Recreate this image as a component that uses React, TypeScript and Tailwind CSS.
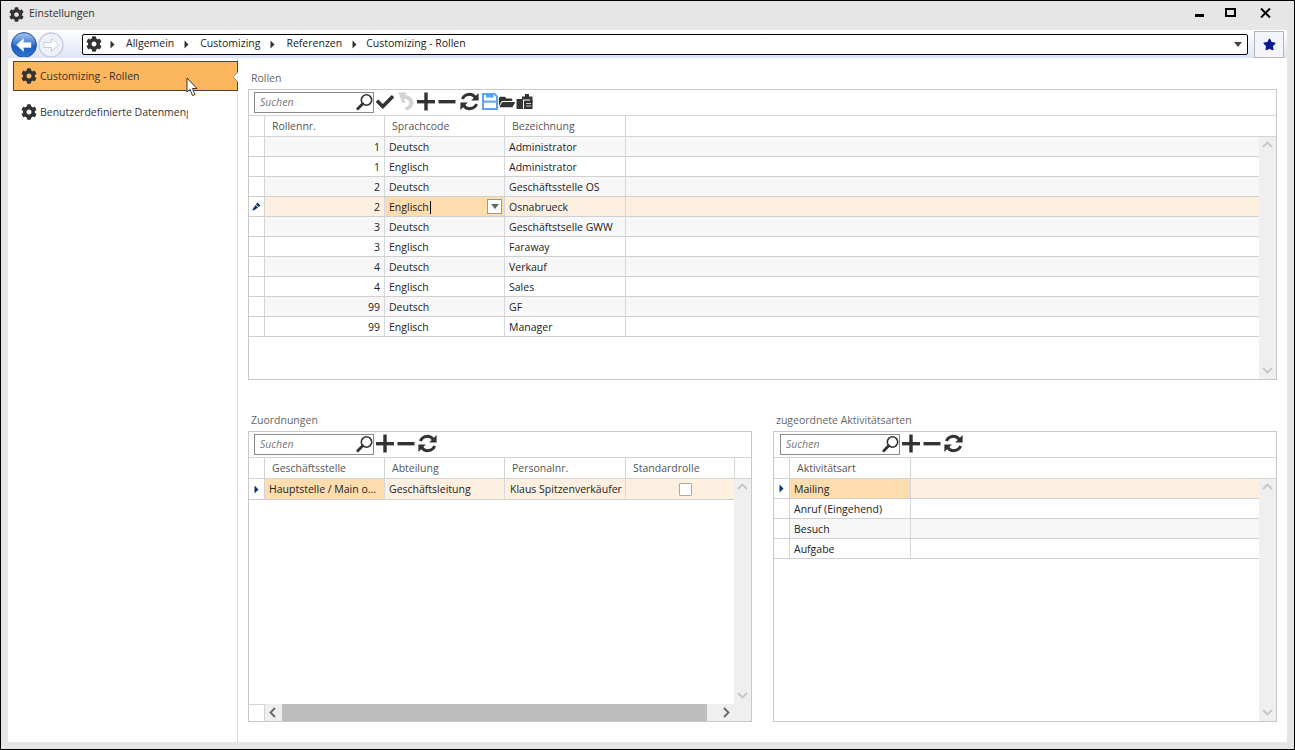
import React from "react";
import { FaCog, FaCheck, FaFolderOpen, FaStar } from "react-icons/fa";

const Gear = ({ s = 16 }: { s?: number }) => <FaCog size={s} color="#333" />;

const SearchIcon = () => (
  <svg width="18" height="18" viewBox="0 0 18 18" fill="none" stroke="#333">
    <circle cx="10.5" cy="7" r="5.2" strokeWidth="1.6" />
    <path d="M6.7 10.8 L1.8 15.8" strokeWidth="2.8" strokeLinecap="round" />
  </svg>
);
const Plus = () => (
  <svg width="20" height="20" viewBox="0 0 20 20" fill="#333">
    <rect x="1" y="8" width="18" height="3.4" />
    <rect x="8.3" y="0.5" width="3.4" height="18" />
  </svg>
);
const Minus = () => (
  <svg width="18" height="20" viewBox="0 0 18 20" fill="#333">
    <rect x="0.5" y="8" width="17" height="3.4" />
  </svg>
);
const Refresh = () => (
  <svg width="19" height="19" viewBox="0 0 19 19" fill="none">
    <path d="M15.4 5.6 A7.4 7.4 0 0 0 2.4 7" stroke="#333" strokeWidth="3" />
    <path d="M3.6 13.4 A7.4 7.4 0 0 0 16.6 12" stroke="#333" strokeWidth="3" />
    <path d="M18.6 1 L18.6 8.6 L11.2 8.6 Z" fill="#333" />
    <path d="M0.4 18 L0.4 10.4 L7.8 10.4 Z" fill="#333" />
  </svg>
);
const Undo = () => (
  <svg width="16" height="19" viewBox="0 0 16 19" fill="none">
    <path d="M0.5 0.5 L9 0.5 L6.6 3 C11.6 3.4 15.5 6.5 15.5 10.5 C15.5 13.8 12.5 16.8 8.8 18.8 L6.6 16 C9.8 14.4 11.4 12.8 11.4 10.7 C11.4 8.6 9.2 7 5.8 6.8 L8 10.4 L4 10.4 Z" fill="#d3d3d3" />
  </svg>
);
const Save = () => (
  <svg width="16" height="17" viewBox="0 0 16 17" fill="none">
    <path d="M1 1 H12.5 L15 3.5 V16 H1 Z" stroke="#5aa2ee" strokeWidth="2" fill="#fff" />
    <rect x="4" y="1" width="7.5" height="3.6" fill="#5aa2ee" />
    <rect x="1" y="7.6" width="14" height="2" fill="#5aa2ee" />
  </svg>
);
const Paste = () => (
  <svg width="17" height="17" viewBox="0 0 17 17" fill="#333">
    <path d="M0.5 6 H7 V16 H0.5 Z" />
    <path d="M6 3.5 H9 V1 H13 V3.5 H16.5 V10 H14 V6.5 H6 Z" />
    <path d="M8 7.5 H16.5 V16 H8 Z" />
    <path d="M10 10 H15 V11 H10 Z M10 12.5 H15 V13.5 H10 Z" fill="#ccc" />
  </svg>
);
const Chevron = ({ d, c = "#c6c6c6" }: { d: "up" | "down" | "left" | "right"; c?: string }) => {
  const p = { up: "M1 7 L5.5 2.5 L10 7", down: "M1 3 L5.5 7.5 L10 3", left: "M7 1 L2.5 5.5 L7 10", right: "M3 1 L7.5 5.5 L3 10" }[d];
  return (
    <svg width="11" height="11" viewBox="0 0 11 11" fill="none" stroke={c} strokeWidth="1.8">
      <path d={p} />
    </svg>
  );
};
const Tri = ({ c = "#333" }: { c?: string }) => (
  <svg width="5" height="9" viewBox="0 0 5 9" fill={c}>
    <path d="M0.5 0.5 L4.5 4.5 L0.5 8.5 Z" />
  </svg>
);

const Search = () => (
  <div className="flex h-[21px] w-[120px] flex-none items-center justify-between border border-[#8a8a8a] bg-white pl-[5px]">
    <span className="text-[10.5px] italic text-[#777]">Suchen</span>
    <span className="flex-none -mr-px -mt-px"><SearchIcon /></span>
  </div>
);

const Label = ({ children }: { children: React.ReactNode }) => (
  <div className="flex h-[22px] items-center pl-[3px] pt-[2px] text-[#666]">{children}</div>
);

type Col = { w: string; title: string };

const Head = ({ cols }: { cols: Col[] }) => (
  <div className="flex h-[22px] flex-none border-b border-t border-[#d4d4d4] text-[#555]">
    <div className="w-[16px] flex-none border-r border-[#d4d4d4]" />
    {cols.map((c) => (
      <div key={c.title} className={`${c.w} flex flex-none items-center border-r border-[#d4d4d4] pl-[7px] pt-[2px]`}>{c.title}</div>
    ))}
  </div>
);

const Cell = ({ w, children, right, bg, tp = "pt-[2px]" }: { w: string; children?: React.ReactNode; right?: boolean; bg?: string; tp?: string }) => (
  <div className={`${w} ${bg ?? ""} ${tp} relative flex flex-none items-center overflow-hidden whitespace-nowrap border-r border-[#d3d8e0] px-[4px] ${right ? "justify-end" : ""}`}>{children}</div>
);

const VScroll = () => (
  <div className="flex w-[17px] flex-none flex-col items-center justify-between bg-[#efefef] py-[3px]">
    <Chevron d="up" />
    <Chevron d="down" />
  </div>
);

const rollen: [string, string, string][] = [
  ["1", "Deutsch", "Administrator"],
  ["1", "Englisch", "Administrator"],
  ["2", "Deutsch", "Geschäftsstelle OS"],
  ["2", "Englisch", "Osnabrueck"],
  ["3", "Deutsch", "Geschäftstselle GWW"],
  ["3", "Englisch", "Faraway"],
  ["4", "Deutsch", "Verkauf"],
  ["4", "Englisch", "Sales"],
  ["99", "Deutsch", "GF"],
  ["99", "Englisch", "Manager"],
];

const Indicator = ({ children }: { children?: React.ReactNode }) => (
  <div className="flex w-[16px] flex-none items-center justify-center border-r border-[#d4d4d4] bg-white">{children}</div>
);

const Pencil = () => (
  <svg width="9" height="9" viewBox="0 0 9 9" fill="#12346e">
    <path d="M5.5 0.5 L8.5 3.5 L6.5 5 L4 2.5 Z" />
    <path d="M3.6 3 L6 5.4 L2.5 8 L0.5 8.5 L1 6.5 Z" />
  </svg>
);

export default function App() {
  return (
    <div className="relative flex h-[750px] w-[1295px] flex-col overflow-hidden border border-black bg-[#e6e6e6] text-[10.5px] text-[#222] [font-family:'Open_Sans','Noto_Sans',sans-serif]">
      {/* title bar */}
      <div className="flex h-[29px] flex-none items-center pb-[3px] pl-[8px]">
        <Gear s={15} />
        <span className="ml-[5px] text-[#333]">Einstellungen</span>
        <div className="ml-auto flex items-center pb-[3px] text-black">
          <div className="mr-[21px] mt-[6px] h-[3px] w-[9px] bg-black" />
          <div className="mr-[24px] h-[9px] w-[11px] border-2 border-black" />
          <svg className="mr-[23px]" width="11" height="10" viewBox="0 0 11 10" stroke="#000" strokeWidth="2"><path d="M1 0.5 L10 9.5 M10 0.5 L1 9.5" /></svg>
        </div>
      </div>
      {/* body */}
      <div className="mx-[7px] mb-[7px] flex min-h-0 flex-1 flex-col bg-white">
        {/* nav */}
        <div className="flex h-[28px] flex-none items-center bg-gradient-to-b from-white to-[#dde4f6]">
          <svg className="ml-[2px] flex-none" width="56" height="26" viewBox="0 0 56 26">
            <defs>
              <linearGradient id="b" x1="0" y1="0" x2="0" y2="1">
                <stop offset="0" stopColor="#a9c8ef" />
                <stop offset="0.45" stopColor="#3f7bd2" />
                <stop offset="0.55" stopColor="#1c5dbd" />
                <stop offset="1" stopColor="#2a78d8" />
              </linearGradient>
            </defs>
            <circle cx="14" cy="14" r="12.4" fill="url(#b)" stroke="#1c4f96" />
            <path d="M21 11.5 H13.5 V7.5 L6.5 14 L13.5 20.5 V16.5 H21 Z" fill="#fff" stroke="#dfe6f2" strokeWidth="0.5" />
            <circle cx="41" cy="14" r="12" fill="#eef1f8" stroke="#c6cde0" strokeWidth="1.4" />
            <path d="M34 11.5 H41.5 V7.5 L48.5 14 L41.5 20.5 V16.5 H34 Z" fill="#fff" stroke="#c6cde0" />
          </svg>
          <div className="ml-[16px] flex h-[21px] w-[1166px] flex-none items-center rounded-[2px] border border-black bg-white pl-[3px]">
            <Gear s={16} />
            <span className="ml-[8px]"><Tri /></span>
            <span className="ml-[11px]">Allgemein</span>
            <span className="ml-[10px]"><Tri /></span>
            <span className="ml-[11px]">Customizing</span>
            <span className="ml-[10px]"><Tri /></span>
            <span className="ml-[11px]">Referenzen</span>
            <span className="ml-[10px]"><Tri /></span>
            <span className="ml-[9px]">Customizing - Rollen</span>
            <svg className="ml-auto mr-[5px]" width="8" height="5" viewBox="0 0 8 5" fill="#444"><path d="M0 0 H8 L4 5 Z" /></svg>
          </div>
          <div className="ml-[6px] flex h-[27px] w-[30px] flex-none items-center justify-center border border-[#b5b5b5] bg-[#f3f5fb]">
            <FaStar size={13} color="#0a1a8c" />
          </div>
        </div>
        <div className="flex min-h-0 flex-1">
          {/* sidebar */}
          <div className="relative w-[230px] flex-none border-r border-[#dcdcdc] pt-[3px]">
            <div className="ml-[5px] flex h-[30px] w-[225px] items-center border border-[#444] bg-[#fbb65e] pl-[7px] text-[#333]">
              <Gear s={16} />
              <span className="ml-[3px] pt-[2px]">Customizing - Rollen</span>
            </div>
            <svg className="absolute right-[-1px] top-[14px]" width="6" height="10" viewBox="0 0 6 10" fill="#fff" stroke="#999"><path d="M6 0 L1 5 L6 10" /></svg>
            <div className="ml-[13px] mt-[6px] flex h-[30px] w-[167px] items-center overflow-hidden whitespace-nowrap text-[#333]">
              <span className="flex-none"><Gear s={16} /></span>
              <span className="ml-[3px] pt-[2px]">Benutzerdefinierte Datenmenge</span>
            </div>
            <svg className="absolute left-[178px] top-[19px]" width="14" height="21" viewBox="0 0 14 21">
              <path d="M1 1 L1 15 L4 12.5 L6.5 18.5 L9 17.5 L6.5 11.5 L11 11.5 Z" fill="#fff" stroke="#222" strokeWidth="0.9" />
            </svg>
          </div>
          {/* main */}
          <div className="flex min-w-0 flex-1 flex-col pl-[10px] pr-[10px] pt-[9px]">
            <Label>Rollen</Label>
            <div className="flex h-[291px] flex-none flex-col border border-[#c8c8c8]">
              <div className="flex h-[25px] flex-none items-center pl-[5px]">
                <Search />
                <div className="mb-[2px] flex items-center">
                  <span className="ml-[1px] flex w-[19px] justify-center"><FaCheck size={18} color="#333" /></span>
                  <span className="ml-[4px]"><Undo /></span>
                  <span className="ml-[2px]"><Plus /></span>
                  <span className="ml-[2px]"><Minus /></span>
                  <span className="ml-[4px]"><Refresh /></span>
                  <span className="ml-[3px]"><Save /></span>
                  <span className="ml-[1px]"><FaFolderOpen size={16} color="#333" /></span>
                  <span className="ml-[1px]"><Paste /></span>
                </div>
              </div>
              <Head cols={[{ w: "w-[120px]", title: "Rollennr." }, { w: "w-[120px]", title: "Sprachcode" }, { w: "w-[121px]", title: "Bezeichnung" }]} />
              <div className="flex min-h-0 flex-1">
                <div className="flex min-w-0 flex-1 flex-col">
                  {rollen.map((r, i) => {
                    const active = i === 3;
                    const bg = active ? "bg-[#fdf0e0]" : i % 2 === 0 ? "bg-[#f7f7f7]" : "bg-white";
                    return (
                      <div key={i} className={`flex h-[20px] flex-none border-b border-[#d0d0d0] ${bg}`}>
                        <Indicator>{active && <Pencil />}</Indicator>
                        <Cell w="w-[120px]" right>{r[0]}</Cell>
                        <Cell w="w-[120px]" bg={active ? "bg-[#fddcae]" : undefined}>
                          {r[1]}
                          {active && <span className="ml-px h-[13px] w-px bg-black" />}
                          {active && (
                            <span className="absolute right-[2px] top-[2px] flex h-[15px] w-[15px] items-center justify-center border border-[#999] bg-white">
                              <svg width="8" height="5" viewBox="0 0 8 5" fill="#666"><path d="M0 0 H8 L4 5 Z" /></svg>
                            </span>
                          )}
                        </Cell>
                        <Cell w="w-[121px]">{r[2]}</Cell>
                      </div>
                    );
                  })}
                </div>
                <VScroll />
              </div>
            </div>
            <div className="mt-[29px] flex min-h-0 gap-[21px]">
              {/* Zuordnungen */}
              <div className="flex w-[504px] flex-none flex-col">
                <Label>Zuordnungen</Label>
                <div className="flex h-[291px] flex-none flex-col border border-[#c8c8c8]">
                  <div className="flex h-[25px] flex-none items-center pl-[5px]">
                    <Search />
                    <div className="mb-[2px] flex items-center">
                      <span className="ml-[1px]"><Plus /></span>
                      <span className="ml-[2px]"><Minus /></span>
                      <span className="ml-[3px]"><Refresh /></span>
                    </div>
                  </div>
                  <Head
                    cols={[
                      { w: "w-[120px]", title: "Geschäftsstelle" },
                      { w: "w-[120px]", title: "Abteilung" },
                      { w: "w-[121px]", title: "Personalnr." },
                      { w: "w-[109px]", title: "Standardrolle" },
                    ]}
                  />
                  <div className="flex min-h-0 flex-1">
                    <div className="flex min-w-0 flex-1 flex-col">
                      <div className="flex h-[21px] flex-none border-b border-[#d0d0d0] bg-[#fdf0e0]">
                        <Indicator><Tri c="#12346e" /></Indicator>
                        <Cell w="w-[120px]" tp="pt-px" bg="bg-[#fddcae]">Hauptstelle / Main o...</Cell>
                        <Cell w="w-[120px]" tp="pt-px">Geschäftsleitung</Cell>
                        <Cell w="w-[121px]" tp="pt-px"><span className="ml-px">Klaus Spitzenverkäufer</span></Cell>
                        <div className="flex w-[109px] flex-none items-center justify-center pl-[9px]">
                          <span className="h-[13px] w-[13px] rounded-[1px] border border-[#aaa] bg-white" />
                        </div>
                      </div>
                    </div>
                    <VScroll />
                  </div>
                  <div className="flex h-[17px] flex-none">
                    <div className="w-[16px] flex-none border-r border-t border-[#d4d4d4] bg-white" />
                    <div className="flex w-[17px] flex-none items-center justify-center bg-[#efefef]"><Chevron d="left" c="#666" /></div>
                    <div className="w-[425px] flex-none bg-[#bebebe]" />
                    <div className="flex flex-1 items-center bg-[#efefef] pl-[14px]"><Chevron d="right" c="#666" /></div>
                  </div>
                </div>
              </div>
              {/* Aktivitätsarten */}
              <div className="flex w-[504px] flex-none flex-col">
                <Label>zugeordnete Aktivitätsarten</Label>
                <div className="flex h-[291px] flex-none flex-col border border-[#c8c8c8]">
                  <div className="flex h-[25px] flex-none items-center pl-[6px]">
                    <Search />
                    <div className="mb-[2px] flex items-center">
                      <span className="ml-[1px]"><Plus /></span>
                      <span className="ml-[2px]"><Minus /></span>
                      <span className="ml-[3px]"><Refresh /></span>
                    </div>
                  </div>
                  <Head cols={[{ w: "w-[121px]", title: "Aktivitätsart" }]} />
                  <div className="flex min-h-0 flex-1">
                    <div className="flex min-w-0 flex-1 flex-col">
                      {["Mailing", "Anruf (Eingehend)", "Besuch", "Aufgabe"].map((t, i) => {
                        const active = i === 0;
                        const bg = active ? "bg-[#fdf0e0]" : i % 2 === 0 ? "bg-[#f7f7f7]" : "bg-white";
                        return (
                          <div key={t} className={`flex h-[20px] flex-none border-b border-[#d0d0d0] ${bg}`}>
                            <Indicator>{active && <Tri c="#12346e" />}</Indicator>
                            <Cell w="w-[121px]" bg={active ? "bg-[#fddcae]" : undefined}>{t}</Cell>
                          </div>
                        );
                      })}
                    </div>
                    <VScroll />
                  </div>
                </div>
              </div>
            </div>
          </div>
        </div>
      </div>
    </div>
  );
}
